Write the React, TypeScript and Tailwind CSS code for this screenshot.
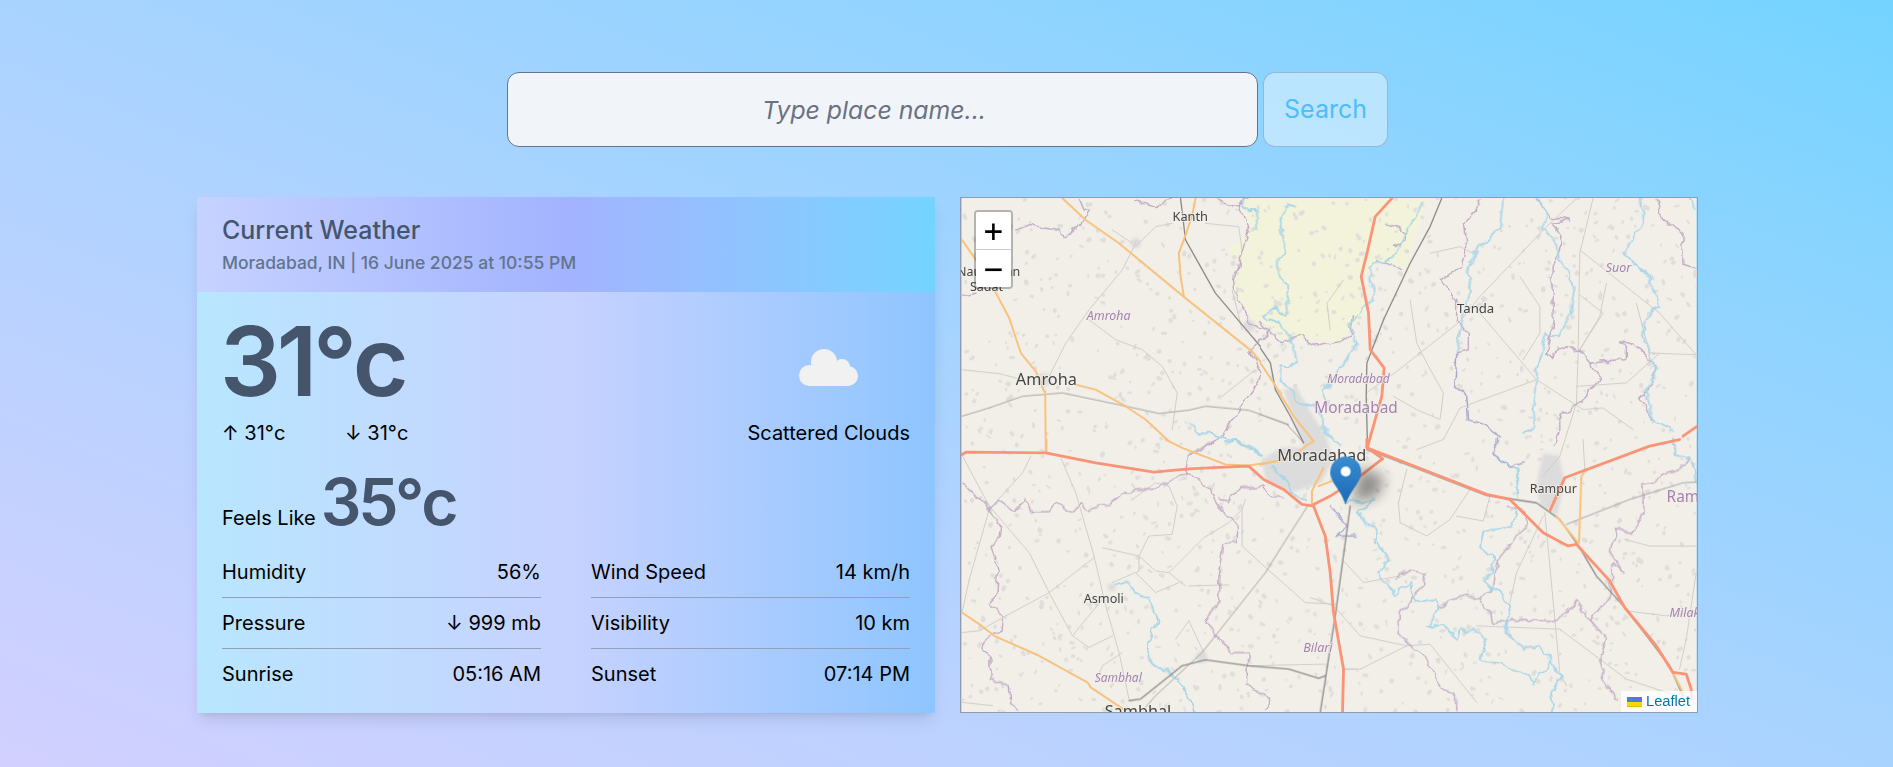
import { useMemo } from "react";

// map lines are traced from crops at 3x, so each region keeps its own crop coordinates
const LINE = {
  road: { stroke: "#d0cec9", width: 3, wiggle: "" },
  border: { stroke: "#c3adc5", width: 4.5, wiggle: "url(#wiggle)" },
  mixed: { stroke: "#a6a4cc", width: 4.5, wiggle: "url(#wiggle)" },
  river: { stroke: "#a9d6e7", width: 5.5, wiggle: "url(#wiggle)" },
  railLight: { stroke: "#a5a5a2", width: 3, wiggle: "" },
  rail: { stroke: "#8b8b88", width: 4, wiggle: "" },
  orange: { stroke: "#f8c27c", width: 6, wiggle: "" },
  salmon: { stroke: "#fb9476", width: 8.5, wiggle: "" },
};

type Kind = keyof typeof LINE;
const ORDER: Kind[] = ["road", "border", "river", "mixed", "railLight", "rail", "orange", "salmon"];

const REGIONS: { t: string; lines: Partial<Record<Kind, string[]>> }[] = [
  {
    t: "translate(-6 -8) scale(0.3333)",
    lines: {
      road: [
        "M540,160 L500,240 L400,360 L330,460 L280,560",
        "M540,170 L600,110 L650,100",
        "M18,540 L130,552 L200,570",
        "M470,120 L530,160",
        "M400,390 L480,450 L560,480 L620,530 L665,610 L650,720",
        "M750,100 L850,110 L860,180",
        "M800,620 L900,540",
        "M830,300 L860,420",
      ],
      border: [
        "M370,25 L385,60 L405,60 L380,100 L320,145 L310,120 L220,100 L180,120",
        "M18,320 L60,310",
        "M540,30 L600,50 L650,25",
        "M880,25 L850,40 L880,130 L850,220 L830,290 L880,400 L940,420 L880,490 L920,550 L900,590 L850,660 L800,740 L700,800",
        "M790,25 L830,50 L860,40",
      ],
      river: [
        "M860,35 L880,60 L905,60 L905,120",
        "M705,700 L730,730 L790,735 L880,770 L920,800",
      ],
      railLight: ["M18,680 L100,655 L200,620 L320,610 L510,650 L610,672 L700,662 L750,650 L880,662 L1000,705"],
      rail: ["M675,25 L690,150 L780,310 L915,470"],
      orange: [
        "M320,25 L390,90 L490,160 L690,325 L890,485 L915,515",
        "M720,25 L710,75 L690,135 L670,190 L675,260 L685,320",
        "M18,150 L60,210 L115,300 L160,385 L195,490 L240,545 L265,605",
        "M268,605 L270,790",
        "M360,585 L420,600 L510,650 L570,690 L640,755",
      ],
    },
  },
  {
    t: "translate(299 -8) scale(0.3333)",
    lines: {
      road: [
        "M950,25 L860,110 L660,320 L600,395 L410,545 L318,610",
        "M1000,25 L960,190 L955,500 L950,640 L900,800 L850,860",
        "M960,180 L1200,370 L1310,495",
        "M660,370 L830,570 L640,640 L600,655 L550,750 L470,780",
        "M830,570 L970,660 L1030,655 L1120,720",
        "M450,330 L470,460 L500,520 L550,610 L540,690 L470,660 L400,620",
        "M780,260 L840,350 L840,430 L790,510",
        "M960,315 L1030,370 L960,480",
        "M1040,280 L1020,380 L960,480",
        "M1310,495 L1170,490 L1130,340",
        "M950,590 L1100,580 L1200,490",
        "M510,190 L600,170 L640,190",
        "M250,270 L200,340 L210,420",
      ],
      border: [
        "M1190,25 L1210,90 L1270,130 L1270,230 L1310,240",
        "M830,30 L870,80 L930,90 L880,100 L910,150 L880,230 L880,400 L860,490 L880,510 L890,470 L960,480 L990,520 L1050,515 L1100,510 L1100,470 L1080,450 L1130,470 L1190,530 L1170,600 L1140,620 L1180,690",
        "M990,520 L1020,560 L980,620 L950,650 L900,680 L900,730 L880,770",
        "M660,30 L650,60 L610,100 L620,180 L610,230 L540,270 L590,330 L590,390 L625,430 L625,480 L590,490",
        "M0,395 L60,460 L120,440 L180,470 L240,455 L270,430 L280,375",
        "M430,235 L350,215",
        "M380,100 L420,110 L435,150 L400,170",
      ],
      river: [
        "M60,90 L85,45 L105,50 M60,90 L70,150 L80,190 L50,210 L50,250 L85,300 L80,380 L40,355 L5,380 L60,400 L100,470 L110,520 L60,530 L60,570 L120,640 L165,650 L200,730 L240,770",
        "M730,25 L720,110 L640,190 L625,250 L630,300 L600,420 L590,490",
        "M830,25 L860,70 L850,110 L900,200 L945,290 L930,380 L900,440 L860,430 L830,560 L820,640 L825,710 L790,730",
        "M1140,25 L1150,95 L1090,190 L1170,260 L1200,350 L1165,370 L1150,440 L1190,540 L1160,610 L1180,690 L1240,720",
        "M1290,25 L1310,60",
        "M190,640 L190,600 L240,540 L290,460 L270,400 L340,330 L330,230 L400,205 L430,140 L490,40",
      ],
      mixed: ["M590,490 L585,590 L620,620 L625,690 L680,710 L720,750"],
      railLight: ["M0,675 L80,705 L130,760"],
      rail: [
        "M545,25 L510,110 L450,220 L370,390 L320,520 L318,620 L322,770",
        "M0,475 L30,520 L45,600 L90,680 L130,760",
      ],
      orange: ["M0,520 L40,580 L100,680 L160,755 L135,770 L100,800 L50,815 L0,825"],
      salmon: [
        "M395,25 L345,80 L325,170 L303,260 L325,370 L330,480 L372,535 L365,620 L345,690 L322,772",
        "M322,775 L368,808",
        "M1270,740 L1310,712",
      ],
    },
  },
  {
    t: "translate(-6 242) scale(0.3333)",
    lines: {
      road: [
        "M20,50 L100,200 L220,340 L280,460 L350,590 L400,625 L470,590",
        "M315,55 L360,160 L415,350 L450,500 L490,640 L520,780",
        "M415,355 L280,460 L150,530 L70,575 L18,580",
        "M225,50 L200,100 L100,210 L40,420 L18,520",
        "M440,325 L550,350 L600,395 L640,400 L690,440",
        "M550,350 L580,290 L650,285 L665,200 L640,140",
        "M640,400 L745,295 L820,250 L860,210 L870,180",
        "M860,210 L860,320 L920,375 L1050,490 L1140,495",
        "M470,430 L550,395 L550,350",
        "M540,400 L600,460 L670,430",
        "M700,440 L820,437",
        "M530,180 L600,130 L640,140",
        "M700,545 L660,600 M700,545 L745,640",
        "M500,640 L440,680 L420,730",
        "M350,590 L440,480",
        "M1110,675 L880,680",
        "M1165,690 L1200,690",
        "M18,790 L110,800",
      ],
      border: [
        "M18,125 L50,155 L100,210 L130,185 L175,215 L205,180 L240,220 L280,220 L305,190 L355,225 L370,195 L400,210 L460,195 L510,155 L600,145 L690,100 L705,40 L780,0",
        "M100,210 L135,250 L130,300 L105,325 L125,380 L120,470 L100,490 L140,530 L135,575 L90,600 L80,625 L105,660 L105,720 L160,740 L165,790 L185,815",
        "M690,100 L760,150 L790,200 L850,265 L840,310 L805,315 L790,420 L790,490 L745,550 L785,590 L830,640 L880,640 L870,730 L940,780 L930,820",
        "M790,170 L815,190 L860,145 L920,140 L940,170 L990,175",
      ],
      river: [
        "M475,435 L520,425 L540,460 L580,475 L610,545 L585,580 L575,660 L670,720 L720,820",
        "M950,80 L990,120 L1020,170 L1050,185",
        "M805,5 L860,5 L920,50",
      ],
      railLight: ["M1060,195 L980,320 L930,400 L740,640 L600,770 L565,810"],
      rail: ["M1185,200 L1140,530 L1115,690 L1095,820", "M520,785 L555,780 L680,680 L750,662 L880,680 L1000,690 L1090,718 L1110,710"],
      orange: [
        "M272,0 L272,40",
        "M630,0 L680,25 L810,75 L880,78 L965,65",
        "M1105,85 L1070,155 L1070,195",
        "M1090,140 L1130,125",
        "M18,520 L70,555 L115,590 L250,650 L395,730 L405,745 L510,815",
      ],
      salmon: [
        "M18,45 L30,38 L270,40 L420,70 L595,98 L700,88 L880,80 L925,120 L985,150 L1040,195 L1075,200",
        "M1075,200 L1110,290 L1125,400 L1135,520 L1165,690 L1162,820",
      ],
    },
  },
  {
    t: "translate(349 242) scale(0.3333)",
    lines: {
      road: [
        "M705,220 L750,700 L770,740",
        "M700,230 L620,400 L600,490",
        "M100,365 L160,430 L270,410",
        "M0,475 L70,500 L150,590 L290,620 L360,615 L500,790",
        "M150,690 L100,690 M150,690 L290,620",
        "M500,560 L750,570 L950,720 L1100,770",
        "M950,515 L1070,530 L1160,520",
        "M270,250 L350,290 L420,240 L480,150",
        "M265,190 L290,90 M270,250 L265,190",
        "M440,230 L520,245 L540,170",
        "M945,300 L1020,320 L1160,320",
        "M1160,400 L1130,600 L1110,690",
        "M820,0 L825,90",
      ],
      border: [
        "M270,530 L300,480 L340,440 L345,400 L300,390 L260,420",
        "M270,530 L270,590 L350,660 L380,730 L440,770 L440,820",
        "M385,505 L445,470 L510,475 L550,450 L560,370 L610,300 L655,260 L640,210 L590,200",
        "M510,475 L550,550 L600,545 L660,540 L710,550 L765,530 L800,485 L840,545 L890,600 L870,680 L890,740 L920,780",
        "M840,545 L900,470 L910,370 L940,400 L905,340 L920,270 L970,280 L1000,220 L1000,130 L1030,125 L1100,90 L1140,60",
      ],
      river: [
        "M110,190 L150,185 L195,180 L140,220 L200,280 L200,310 L235,360 L200,400 L255,470 L300,430 L310,490 L380,480 L385,510 L350,560 L400,555 L440,600 L450,565 L510,580 L525,610 L515,660 L590,680 L660,710 L670,730 L720,670 L755,710 L720,760 L730,820",
        "M555,450 L600,500 L585,570 L640,630 L690,620 L725,665",
        "M520,280 L610,255 L620,200",
        "M520,280 L510,320 L545,350 L550,400 L520,420 L550,450",
        "M560,50 L620,90 L625,170",
        "M1090,0 L1100,50 L1145,60 L1165,130",
      ],
      mixed: ["M60,195 L105,260 L80,290 L140,290", "M560,0 L550,40 L600,80 L640,70"],
      railLight: ["M770,255 L960,180 L1120,130 L1160,128"],
      rail: ["M170,30 L290,75 L530,168 L600,178 L680,190 L750,240 L810,325 L860,410 L950,510 L1080,680 L1120,770"],
      orange: ["M830,90 L815,110 L808,310", "M740,230 L805,310", "M1090,700 L1125,770"],
      salmon: [
        "M170,25 L300,75 L530,165 L600,180 L640,220 L700,280 L775,320 L800,315 L900,425 L945,505 L1040,620 L1090,700 L1130,705 L1145,750 L1145,780",
        "M170,0 L170,25",
        "M215,60 L130,125 L60,170 L10,195",
        "M720,215 L765,115 L1020,20 L1110,0",
      ],
    },
  },
];

const LABELS = [
  { x: 211, y: 23, s: 12.8, text: "Kanth" },
  { x: 54, y: 187, s: 16.3, text: "Amroha" },
  { x: 125, y: 122, s: 12.5, text: "Amroha", italic: true },
  { x: -5, y: 78, s: 12.5, text: "Naugawan" },
  { x: 8, y: 93, s: 12.5, text: "Sadat" },
  { x: 316, y: 264, s: 16.4, text: "Moradabad" },
  { x: 366, y: 185, s: 12, text: "Moradabad", italic: true },
  { x: 353, y: 215, s: 15.4, text: "Moradabad", purple: true },
  { x: 496, y: 115, s: 13.2, text: "Tanda" },
  { x: 645, y: 74, s: 12.5, text: "Suor", italic: true },
  { x: 569, y: 296, s: 12.5, text: "Rampur" },
  { x: 706, y: 305, s: 15.4, text: "Rampur", purple: true },
  { x: 709, y: 420, s: 12.5, text: "Milak", italic: true },
  { x: 122, y: 406, s: 12.7, text: "Asmoli" },
  { x: 342, y: 455, s: 12.5, text: "Bilari", italic: true },
  { x: 133, y: 485, s: 12, text: "Sambhal", italic: true },
  { x: 143, y: 520, s: 16.3, text: "Sambhal" },
];

function useSpecks() {
  return useMemo(() => {
    let seed = 4217;
    const rnd = () => {
      seed = (seed * 16807) % 2147483647;
      return seed / 2147483647;
    };
    return Array.from({ length: 1300 }, () => ({
      x: rnd() * 736,
      y: rnd() * 515,
      rx: 0.9 + rnd() * 1.5,
      ry: 0.9 + rnd() * 2.4,
      a: rnd() * 180,
    }));
  }, []);
}

function MapDrawing() {
  const specks = useSpecks();
  return (
    <svg viewBox="0 0 735.5 515" className="absolute inset-0 w-full h-full">
      <defs>
        <filter id="soft">
          <feGaussianBlur stdDeviation="0.5" />
        </filter>
        <filter id="urban" x="-20%" y="-20%" width="140%" height="140%">
          <feGaussianBlur stdDeviation="1.6" />
        </filter>
        <filter id="wiggle" x="-5%" y="-5%" width="110%" height="110%" colorInterpolationFilters="sRGB">
          <feTurbulence type="fractalNoise" baseFrequency="0.09" numOctaves="2" seed="7" result="n" />
          <feDisplacementMap in="SourceGraphic" in2="n" scale="9" xChannelSelector="R" yChannelSelector="G" />
        </filter>
        <filter id="shadow" x="-80%" y="-80%" width="260%" height="260%">
          <feGaussianBlur stdDeviation="7" />
        </filter>
        <linearGradient id="pin" x1="0" y1="0" x2="0" y2="1">
          <stop offset="0" stopColor="#3a8dce" />
          <stop offset="1" stopColor="#1a69b8" />
        </linearGradient>
      </defs>
      <rect width="736" height="515" fill="#f2efe9" />
      <g filter="url(#soft)">
        <g transform="translate(299 -8) scale(0.3333)" fill="#f2f3da">
          <path d="M0,25 L500,25 L460,170 L440,235 L350,215 L305,260 L320,370 L270,420 L240,460 L130,440 L80,455 L30,410 L0,390 Z" />
        </g>
        <g transform="translate(-6 -8) scale(0.3333)" fill="#f2f3da">
          <path d="M860,25 L1100,25 L1100,440 L1040,450 L990,430 L960,405 L900,400 L850,330 L830,290 L850,220 L815,180 L880,130 Z" />
        </g>
        {specks.map((s, i) => (
          <ellipse
            key={i}
            cx={s.x}
            cy={s.y}
            rx={s.rx}
            ry={s.ry}
            transform={`rotate(${s.a} ${s.x} ${s.y})`}
            fill="#dfdedb"
          />
        ))}
        <g fill="#dcdcdc" filter="url(#urban)">
          <path d="M322,192 L335,190 L365,240 L372,262 L360,285 L330,295 L305,285 L300,262 L320,250 L342,250 Z" />
          <path d="M582,256 L598,258 L604,285 L596,318 L580,308 L575,290 Z" />
          <circle cx="174" cy="45" r="5" />
          <circle cx="82" cy="182" r="7" />
          <circle cx="288" cy="128" r="6" />
          <circle cx="150" cy="390" r="4" />
          <circle cx="240" cy="460" r="6" />
        </g>
        {ORDER.map((k) => (
          <g key={k} filter={LINE[k].wiggle || undefined}>
            {REGIONS.map((r, i) => (
              <g key={i} transform={r.t} fill="none" strokeLinecap="round" strokeLinejoin="round">
                {(r.lines[k] || []).map((d, j) => (
                  <path
                    key={j}
                    d={d}
                    stroke={LINE[k].stroke}
                    strokeWidth={LINE[k].width}
                    strokeDasharray={k === "border" ? "16 3 5 3" : undefined}
                  />
                ))}
              </g>
            ))}
          </g>
        ))}
        {LABELS.map((l, i) => (
          <text
            key={i}
            x={l.x}
            y={l.y}
            fontSize={l.s}
            fontFamily="'Noto Sans', 'Open Sans', sans-serif"
            fontStyle={l.italic ? "italic" : "normal"}
            fill={l.italic || l.purple ? "#a583ad" : "#444444"}
            stroke="#f2efe9"
            strokeWidth="2"
            strokeOpacity="0.75"
            style={{ paintOrder: "stroke" }}
          >
            {l.text}
          </text>
        ))}
      </g>
      <path d="M390,305 L400,270 L424,280 L415,300 Z" fill="#000" opacity="0.42" filter="url(#shadow)" />
      <path d="M384.5,307 C379,291 369,285 369,274.5 A15.5,15.5 0 1 1 400,274.5 C400,285 390,291 384.5,307 Z" fill="url(#pin)" />
      <circle cx="384.5" cy="274" r="5" fill="#fff" />
    </svg>
  );
}

function Cloud() {
  return (
    <svg width="59" height="37" viewBox="0 0 59 37" fill="#f1f1f1">
      <circle cx="25" cy="13" r="13" />
      <circle cx="43" cy="18" r="8" />
      <circle cx="10.5" cy="26.5" r="10.5" />
      <circle cx="49" cy="27" r="10" />
      <rect x="10" y="20" width="40" height="17" />
    </svg>
  );
}

const STATS = [
  [
    ["Humidity", "56%"],
    ["Pressure", "↓ 999 mb"],
    ["Sunrise", "05:16 AM"],
  ],
  [
    ["Wind Speed", "14 km/h"],
    ["Visibility", "10 km"],
    ["Sunset", "07:14 PM"],
  ],
];

export default function App() {
  return (
    <div className="h-[767px] overflow-hidden bg-linear-to-tr from-[#d2d0ff] via-[#a9d3ff] to-sky-300 [font-family:Inter,sans-serif] pt-[72px]">
      <div className="flex justify-center gap-[5px] pl-[2px]">
        <input
          placeholder="Type place name..."
          className="w-[751px] h-[75px] rounded-xl border border-slate-500 bg-slate-100 pr-[17px] text-center text-[24.8px] italic placeholder:text-gray-500 outline-none"
        />
        <button className="w-[125px] h-[75px] rounded-xl border border-slate-500/40 bg-white/40 text-[25px] text-[#4dbdfb]">
          Search
        </button>
      </div>

      <div className="w-[1501px] ml-[197px] mt-[50px] grid grid-cols-2 gap-[25px]">
        <div className="shadow-lg bg-linear-to-r from-sky-200 via-indigo-200 to-blue-300">
          <div className="px-[25px] py-[17px] flex flex-col gap-[5px] bg-linear-to-r from-indigo-200 via-indigo-300 to-sky-300">
            <h2 className="text-[25px] leading-8 font-medium text-slate-600">Current Weather</h2>
            <p className="text-[17.5px] leading-6 font-medium text-slate-500">Moradabad, IN | 16 June 2025 at 10:55 PM</p>
          </div>

          <div className="px-[25px] pt-[21px] pb-[25px]">
            <div className="flex justify-between">
              <div>
                <div className="text-8xl leading-none font-semibold tracking-[-0.045em] text-slate-600 -ml-[2px]">31°c</div>
                <div className="flex mt-[10px] text-xl text-black">
                  <span className="w-[123px]">↑ 31°c</span>
                  <span>↓ 31°c</span>
                </div>
              </div>
              <div className="flex flex-col items-center justify-end gap-[33px] text-xl text-black">
                <Cloud />
                <span>Scattered Clouds</span>
              </div>
            </div>

            <div className="flex items-baseline gap-[5px] mt-[23px] text-xl text-black">
              <span>Feels Like</span>
              <span className="text-[64px] leading-none font-semibold tracking-[-0.05em] text-slate-600">35°c</span>
            </div>

            <div className="grid grid-cols-2 gap-x-[50px] mt-[13px] text-xl text-black">
              {STATS.map((col, i) => (
                <div key={i} className="divide-y divide-slate-400">
                  {col.map(([label, value]) => (
                    <div key={label} className="flex justify-between py-[11px] last:pb-0">
                      <span>{label}</span>
                      <span>{value}</span>
                    </div>
                  ))}
                </div>
              ))}
            </div>
          </div>
        </div>

        <div className="relative overflow-hidden border border-[#8f9bb0]">
          <MapDrawing />
          <div className="absolute left-[13px] top-[12px] w-[39px] rounded-[4px] border-2 border-black/25 bg-clip-padding [font-family:'DejaVu_Sans_Mono',monospace]">
            <div className="h-[38px] flex items-center justify-center bg-white rounded-t-[2px] border-b border-[#ccc] text-[32px] text-black">+</div>
            <div className="h-[37px] flex items-center justify-center bg-white rounded-b-[2px] text-[32px] text-black">−</div>
          </div>
          <div className="absolute right-0 bottom-0 h-[21px] w-[76px] flex items-center gap-[4px] pl-[6px] bg-white/80 text-[14.7px] text-[#0078a8] [font-family:'Liberation_Sans',sans-serif]">
            <svg width="15" height="10" viewBox="0 0 15 10">
              <rect width="15" height="5" fill="#4c7be1" />
              <rect y="5" width="15" height="4" fill="#ffd500" />
              <rect y="9" width="15" height="1" fill="#e0bc00" />
            </svg>
            <span>Leaflet</span>
          </div>
        </div>
      </div>
    </div>
  );
}
